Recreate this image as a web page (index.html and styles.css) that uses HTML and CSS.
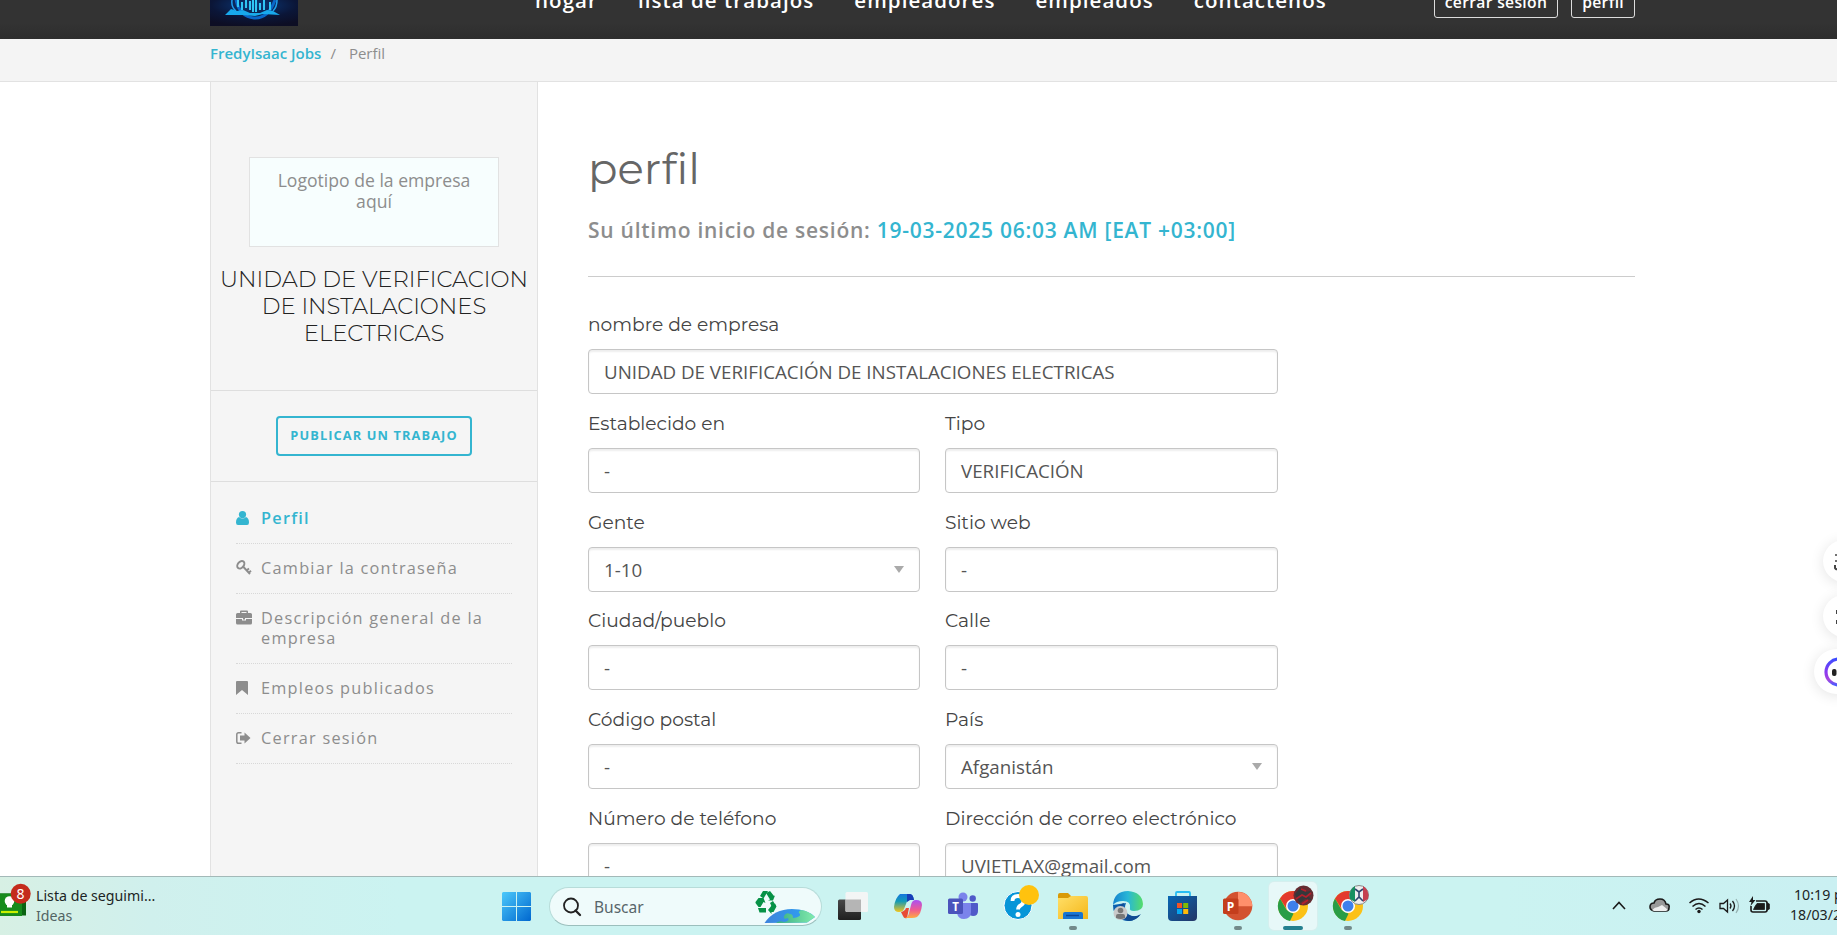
FILE: index.html
```html
<!DOCTYPE html>
<html lang="es">
<head>
<meta charset="utf-8">
<title>Perfil - FredyIsaac Jobs</title>
<link rel="stylesheet" href="styles.css">
</head>
<body>
<div class="screen">
<div class="page">
  <header class="topbar">
    <div class="container topbar-row">
      <svg class="brand" viewBox="0 0 88 26">
        <defs><radialGradient id="bg" cx=".5" cy=".2" r=".8"><stop offset="0" stop-color="#0b3a7c"/><stop offset=".6" stop-color="#0b1638"/><stop offset="1" stop-color="#0d0e24"/></radialGradient></defs>
        <rect width="88" height="26" fill="url(#bg)"/>
        <path d="M26 0Q30 17 44 18T65 0" fill="none" stroke="#0967c9" stroke-width="3"/>
        <path d="M22 0Q21 7 26 11M67 0Q67 7 63 11" fill="none" stroke="#1fa1f0" stroke-width="1.5"/>
        <path d="M28 0v7M32 2v8M36 0v8M40 1v9M43 0v12M46 0v12M50 3v7M54 0v10M60 2v8" stroke="#31c5f4" stroke-width="2"/>
        <path d="M15 15l6-6 6 2 6-1 7 3 10 0 7-3 6 1 7 4-17-1-8 2-12-1z" fill="#18a9ec"/>
      </svg>
      <nav class="nav"><a>hogar</a><a>lista de trabajos</a><a>empleadores</a><a>empleados</a><a>contáctenos</a></nav>
      <div class="account"><a>cerrar sesión</a><a>perfil</a></div>
    </div>
  </header>
  <div class="crumbs"><div class="container crumbs-row"><b>FredyIsaac Jobs</b><span>/</span><span class="here">Perfil</span></div></div>
  <div class="container body">
    <aside class="sidebar">
      <section class="company">
        <div class="logo-box">Logotipo de la empresa<br>aquí</div>
        <h2>UNIDAD DE VERIFICACION<br>DE INSTALACIONES<br>ELECTRICAS</h2>
      </section>
      <section class="post"><a class="post-btn">PUBLICAR UN TRABAJO</a></section>
      <ul class="menu">
        <li class="active"><svg viewBox="0 0 16 16"><circle cx="6.500" cy="4.600" r="3.600"/><path d="M3 7Q6.500 10 10 7Q13 8 13 12.500Q13 15 11 15H2Q0 15 0 12.500Q0 8 3 7Z"/></svg><span>Perfil</span></li>
        <li><svg viewBox="0 0 16 16"><ellipse cx="4.800" cy="4.800" rx="4.200" ry="3" transform="rotate(-50 4.800 4.800)" fill="none" stroke="#8d8d8d" stroke-width="2"/><path d="M7 6.500L14 14M10.500 10.500L13 8.500M12.800 12.700L15 10.800" fill="none" stroke="#8d8d8d" stroke-width="1.900"/></svg><span>Cambiar la contraseña</span></li>
        <li><svg viewBox="0 0 16 16"><path d="M4 3V1.500Q4 .5 5 .5H11Q12 .5 12 1.500V3H14.500Q16 3 16 4.500V8H0V4.500Q0 3 1.500 3ZM5.500 3H10.500V2H5.500ZM0 9H6V10.500H10V9H16V13Q16 14.500 14.500 14.500H1.500Q0 14.500 0 13ZM7 8H9V9.500H7Z" fill-rule="evenodd"/></svg><span>Descripción general de la<br>empresa</span></li>
        <li><svg viewBox="0 0 16 16"><path d="M0 2Q0 1 1 1H11Q12 1 12 2V15L6 10L0 15Z"/></svg><span>Empleos publicados</span></li>
        <li><svg viewBox="0 0 16 16"><path d="M5.500 2.700H2.500Q.8 2.700 .8 4.500V11.500Q.8 13.300 2.500 13.300H5.500" fill="none" stroke="#8d8d8d" stroke-width="1.500"/><path d="M4 5.500H8.500V2.500L14.500 8L8.500 13.500V10.500H4Z"/></svg><span>Cerrar sesión</span></li>
      </ul>
    </aside>
    <main class="main">
      <h1>perfil</h1>
      <p class="last">Su último inicio de sesión: <em>19-03-2025 06:03 AM [EAT +03:00]</em></p>
      <div class="form">
        <div class="field wide"><label>nombre de empresa</label><div class="input">UNIDAD DE VERIFICACIÓN DE INSTALACIONES ELECTRICAS</div></div>
        <div class="field"><label>Establecido en</label><div class="input">-</div></div>
        <div class="field"><label>Tipo</label><div class="input">VERIFICACIÓN</div></div>
        <div class="field"><label>Gente</label><div class="input">1-10<i class="caret"></i></div></div>
        <div class="field"><label>Sitio web</label><div class="input">-</div></div>
        <div class="field"><label>Ciudad/pueblo</label><div class="input">-</div></div>
        <div class="field"><label>Calle</label><div class="input">-</div></div>
        <div class="field"><label>Código postal</label><div class="input">-</div></div>
        <div class="field"><label>País</label><div class="input">Afganistán<i class="caret"></i></div></div>
        <div class="field"><label>Número de teléfono</label><div class="input">-</div></div>
        <div class="field"><label>Dirección de correo electrónico</label><div class="input">UVIETLAX@gmail.com</div></div>
      </div>
    </main>
  </div>
</div>
<div class="float f1"><svg viewBox="0 0 42 42"><path d="M12 15h18M12 21h18" stroke="#444" stroke-width="1.500"/><path d="M12 25v3q1 2 3 1v-4" fill="none" stroke="#444" stroke-width="2"/></svg></div>
<div class="float f2"><svg viewBox="0 0 42 42"><path d="M14 15v4M14 25v4" stroke="#444" stroke-width="2"/></svg></div>
<div class="float f3"><svg viewBox="0 0 45 45"><defs><linearGradient id="ring" x2="0" y2="1"><stop offset="0" stop-color="#3d4cff"/><stop offset=".5" stop-color="#8b39f0"/><stop offset=".8" stop-color="#a845dd"/><stop offset="1" stop-color="#4b5cff"/></linearGradient></defs><circle cx="25" cy="23" r="13" fill="#fff" stroke="url(#ring)" stroke-width="3.200"/><rect x="18" y="20" width="4.500" height="7" rx="2" fill="#222"/></svg></div>
<footer class="taskbar">
  <div class="widget">
    <svg viewBox="0 882 34 53"><path d="M0 893.500h22l4 1v21h-26z" fill="#0a6412"/><path d="M0 893.500h22v22.500h-22z" fill="#168b1c"/><path d="M1 912h17" stroke="#c8f000" stroke-width="2.200"/><circle cx="9.500" cy="901" r="4.800" fill="#fff"/><path d="M7 904h5v3.500h-5z" fill="#fff"/><circle cx="20.700" cy="893.800" r="10" fill="#c42b1c"/><text x="20.500" y="898.800" text-anchor="middle" font-size="14" fill="#fff" font-family="Noto Sans">8</text></svg>
    <div class="widget-text"><span>Lista de seguimi...</span><small>Ideas</small></div>
  </div>
  <svg class="start" viewBox="0 0 29 29"><defs><linearGradient id="win" x2="1" y2="1"><stop offset="0" stop-color="#4cc9fb"/><stop offset="1" stop-color="#0067cf"/></linearGradient></defs><path d="M1 0h13v14H0V1zM15 0h13l1 1v13H15zM0 15h14v14H1l-1-1zM15 15h14v13l-1 1H15z" fill="url(#win)"/></svg>
  <div class="search">
    <svg class="lens" viewBox="0 0 20 20"><circle cx="9" cy="8.500" r="7" fill="none" stroke="#222" stroke-width="1.800"/><path d="M13.500 13.500l4.500 4.500" stroke="#222" stroke-width="2.300" stroke-linecap="round"/></svg>
    <span>Buscar</span>
    <svg class="doodle" viewBox="754 890 64 34"><defs><linearGradient id="earth"><stop offset="0" stop-color="#3d83dc"/><stop offset="1" stop-color="#2ca5f5"/></linearGradient><linearGradient id="land"><stop offset="0" stop-color="#35ad83"/><stop offset="1" stop-color="#83ebad"/></linearGradient></defs><path d="M765.500 923Q775 909 793 909Q808 909 816 917L808 922.500Z" fill="url(#earth)"/><path d="M777 923q3-3 8-1q6-1 4-4q-5 2-4-2q2-4 6-2q3 0 3 4q8-1 7-4q-3-2 1-4q8 1 14 7l-8 5.500z" fill="url(#land)"/><g fill="#079247"><path d="M761 896l3-5h5l-4.500 7.500z"/><path d="M767 893l4-2 4 5 1-.5-2 5h-5l2-1z"/><path d="M756.500 902l3-4h5l2 5-2-1-3 5h-2l-3-4z"/><path d="M759 908h8v4.500h-6.500z"/><path d="M769 910l4-5v2.500l-1-2 4-2 1.500 3-3 5.500h-2v2z"/><path d="M774 901l3 5-4 1-2-4z"/></g></svg>
  </div>
  <div class="apps">
    <div class="app"><svg viewBox="829 882 48 48"><defs><linearGradient id="tv" x2="0" y2="1"><stop offset="0" stop-color="#484848"/><stop offset="1" stop-color="#202020"/></linearGradient></defs><rect x="838" y="899.500" width="23" height="20.500" rx="1.500" fill="url(#tv)"/><rect x="845.500" y="892" width="22.500" height="20" rx="1.500" fill="#f3f5f5"/><path d="M845.500 899.500H861V912H847q-1.500 0-1.500-1.500z" fill="#b5b5b5"/></svg></div>
    <div class="app"><svg viewBox="884 882 48 48"><defs><linearGradient id="cp1" x2="0" y2="1"><stop offset="0" stop-color="#1775de"/><stop offset=".4" stop-color="#119bb7"/><stop offset="1" stop-color="#f4c51b"/></linearGradient><linearGradient id="cp2" x2="0" y2="1"><stop offset="0" stop-color="#a951f4"/><stop offset=".55" stop-color="#f05b91"/><stop offset="1" stop-color="#ffac42"/></linearGradient></defs><path d="M900 894h10q3 0 4 6h-4q-3 0-4 4l-2 5q-1 3-5 3-5 0-5-5 1-9 6-13z" fill="url(#cp1)"/><path d="M907 894h3q3 0 4 6h-4l-3 2z" fill="#183db8"/><path d="M901 912q4-1 5-4l3 0-2 10q-3 1-4-2z" fill="#e84b35"/><path d="M916 900q6 0 6 5-1 9-5 12-2 1-5 1h-8q4 0 5-5l2-8q1-5 5-5z" fill="url(#cp2)"/></svg></div>
    <div class="app"><svg viewBox="939 882 48 48"><circle cx="963" cy="897" r="4.500" fill="#7b83eb"/><circle cx="972.700" cy="898.500" r="3.200" fill="#5059c9"/><path d="M970 903h7q1 0 1 1v7q0 5-5 5-3 0-4-2z" fill="#5059c9"/><path d="M957 903h14v9q0 7-7 7-6 0-7-6z" fill="#7b83eb"/><rect x="948" y="898.500" width="15" height="15.500" rx="1.500" fill="#4b53bc"/><text x="955.500" y="910.500" text-anchor="middle" font-family="Open Sans" font-weight="700" font-size="11.500" fill="#fff">T</text></svg></div>
    <div class="app"><svg viewBox="994 882 48 48"><circle cx="1018" cy="905.500" r="14" fill="#0795d8" stroke="#fff" stroke-width="1"/><path d="M1012.500 901q0-5 5.500-5t5.500 5q0 3-3 4.500-2.500 1.500-2.500 4" fill="none" stroke="#fff" stroke-width="3.800"/><circle cx="1018" cy="914.500" r="2.500" fill="#fff"/><circle cx="1029" cy="895" r="10" fill="#ffc20e"/></svg></div>
    <div class="app"><svg viewBox="1049 882 48 48"><defs><linearGradient id="fo" x2="1" y2="1"><stop offset="0" stop-color="#ffdf68"/><stop offset="1" stop-color="#f5b719"/></linearGradient></defs><path d="M1058 895q0-2 2-2h8l3 3v5h-13z" fill="#d99a08"/><path d="M1058 898h10l3-2h15q2 0 2 2v21h-30z" fill="url(#fo)"/><path d="M1063 919v-5q0-2 2-2h16q2 0 2 2v5z" fill="#1876d2"/><path d="M1066 915.500h13" stroke="#0a4795" stroke-width="1.500"/></svg><i class="dot"></i></div>
    <div class="app"><svg viewBox="1104 882 48 48"><defs><linearGradient id="ed"><stop offset="0" stop-color="#1683cf"/><stop offset=".5" stop-color="#29b7d6"/><stop offset="1" stop-color="#55dd69"/></linearGradient></defs><path d="M1113 905a15 15 0 0 0 27 10q-7 3-12-1t-2-11z" fill="#0c5fae"/><path d="M1113 905q1-14 15-14 14 1 15 13 0 7-9 7-5 0-4-3 1-7-7-7-7 0-10 4z" fill="url(#ed)"/><path d="M1124 903q-3 9 5 12 6 3 12-1-5 7-12 7-9-2-10-12 1-5 5-6z" fill="#104b92"/><circle cx="1120.500" cy="913" r="7" fill="#c9c9c9"/><circle cx="1120.500" cy="910.500" r="2.800" fill="#777"/><path d="M1116 918v-2q0-2 2-2h5q2 0 2 2v2q-4 2-9 0z" fill="#777"/></svg></div>
    <div class="app"><svg viewBox="1159 882 48 48"><defs><linearGradient id="st" x2="1" y2="1"><stop offset="0" stop-color="#0767b5"/><stop offset="1" stop-color="#243565"/></linearGradient></defs><path d="M1176 898v-5q0-1 1-1h12q1 0 1 1v5" fill="none" stroke="#28bdf2" stroke-width="1.800"/><path d="M1168 896h29v21q0 4-4 4h-21q-4 0-4-4z" fill="url(#st)"/><path d="M1177 903h5v5h-5z" fill="#f15325"/><path d="M1183.200 903h5v5h-5z" fill="#80bb03"/><path d="M1177 909h5v5h-5z" fill="#05a6f0"/><path d="M1183.200 909h5v5h-5z" fill="#ffba08"/></svg></div>
    <div class="app"><svg viewBox="1214 882 48 48"><circle cx="1238" cy="906" r="14.300" fill="#d35230"/><path d="M1238 892a14.300 14.300 0 0 1 14.300 14.300H1238z" fill="#ff8f6b"/><rect x="1223" y="898.500" width="15.500" height="15.500" rx="1.500" fill="#c43e1c"/><text x="1230.500" y="910.500" text-anchor="middle" font-family="Open Sans" font-weight="700" font-size="12" fill="#fff">P</text></svg><i class="dot"></i></div>
    <div class="app current"><svg viewBox="1269 882 48 48"><g id="chrome"><circle cx="1293" cy="906" r="15" fill="#fbc116"/><path d="M1280 898.500a15 15 0 0 1 26 0l-2 3h-11l-6 8z" fill="#e33b2e"/><path d="M1280 898.500l6.500 11.300 7 4-3.500 7.200a15 15 0 0 1-10-22.500z" fill="#299d46"/><circle cx="1293" cy="906" r="7" fill="#fff"/><circle cx="1293" cy="906" r="5.500" fill="#3e80ec"/></g><circle cx="1303.500" cy="895.500" r="10" fill="#652c31"/><path d="M1295 894l5-6 5 4 6-1-3 5 4 4-7-1-5 4-4-6z" fill="#35383b"/><path d="M1296 899l6-4 4 2 5-4M1301 889l5 2M1302 904l6-4" fill="none" stroke="#b31f2c" stroke-width="1.700"/></svg><i class="dot long"></i></div>
    <div class="app"><svg viewBox="1324 882 48 48"><use href="#chrome" x="55"/><circle cx="1359" cy="895" r="9.500" fill="#eee" stroke="#888"/><path d="M1355 886q-7 4-5 13l5 3z" fill="#169060"/><path d="M1363 886q7 4 5 13l-5 3z" fill="#c54050"/><path d="M1355 889l4 3 4-3M1355 901l4-4 4 4M1359 892v6" fill="none" stroke="#2e456e" stroke-width="1.600"/></svg><i class="dot"></i></div>
  </div>
  <svg class="tray" viewBox="1605 882 175 48" fill="none" stroke="#1a1a1a" stroke-width="1.600"><path d="M1614 909l6-6.500 6 6.500"/><path d="M1655 911q-4-1-4-4 0-4 4-4 1-4 6-4t6 5q4 0 3 4 0 3-3 3z" fill="#999"/><path d="M1653 910q3-3 6-3l4-2q4 3 6 5l-2 1h-12z" fill="#eee" stroke="none"/><path d="M1690.500 903q9-8 19 0M1693.500 906.500q6.500-6 13 0M1696.500 909.500q3.500-3 7 0" stroke-width="1.500"/><circle cx="1700" cy="911.500" r="1.700" fill="#1a1a1a" stroke="none"/><path d="M1721 903.500v5h3.500l4 3.500v-12l-4 3.500zM1731 903.500q2 2.500 0 5M1733.500 901q4 5 0 10" stroke-width="1.300"/><path d="M1737 899q5 7 0 14" stroke="#95b0b0" stroke-width="1.200"/><path d="M1757 901h9q2 0 2 2v7q0 2-2 2h-12q-2 0-2-2v-4"/><path d="M1758 903.500h7.500v6h-11l1.500-3z" fill="#1a1a1a" stroke-width=".8"/><path d="M1768.500 903.500l1.500 1v4l-1.500 1z" fill="#1a1a1a"/><path d="M1754 896l-4 6h2.500l-1 4 5-6h-2.500z" fill="#1a1a1a" stroke="none"/></svg>
  <div class="clock"><span>10:19 p. m.</span><span class="date">18/03/2025</span></div>
</footer>
</div>
</body>
</html>
```

FILE: styles.css
```css
* { box-sizing: border-box; }
body { margin: 0; overflow: hidden; font-family: "Open Sans", sans-serif; color: #8d8d8d; background: #fff; }
.screen { position: relative; width: 1837px; height: 935px; overflow: hidden; display: flex; flex-direction: column; }
.page { height: 876px; overflow: hidden; }
.container { width: 1425px; margin-left: 210px; }
.topbar { height: 39px; background: linear-gradient(#333 60%, #2d2d2d); overflow: hidden; }
.topbar-row { display: flex; height: 39px; align-items: flex-start; }
.brand { width: 88px; height: 26px; }
.nav { display: flex; gap: 40px; margin: -16px 0 0 237px; color: #fff; font-size: 20.500px; line-height: 32px; font-weight: 600; letter-spacing: 1.060px; white-space: nowrap; }
.account { display: flex; gap: 13px; margin: -22px 0 0 auto; color: #fff; font-size: 15.700px; font-weight: 600; line-height: 47px; white-space: nowrap; letter-spacing: .3px; }
.account a { height: 40px; border: 1px solid #ddd; border-radius: 3px; padding: 0 10px; }
.crumbs { height: 43px; background: #f4f4f4; border-bottom: 1px solid #e2e2e2; }
.crumbs-row { display: flex; font-size: 15px; line-height: 29px; }
.crumbs b { color: #34b5d0; font-weight: 600; margin-right: 9px; }
.here { margin-left: 13px; }
.body { display: flex; height: 794px; }
.sidebar { width: 328px; background: #f5f5f5; border: solid #e2e2e2; border-width: 0 1px; }
.company { height: 309px; padding-top: 75px; border-bottom: 1px solid #dedede; }
.logo-box { width: 250px; height: 90px; margin: 0 auto; padding-top: 12px; text-align: center; background: #f7fefe; border: 1px solid #e2e2e2; font-size: 17.600px; line-height: 21px; }
h2 { margin: 19px -10px 0; text-align: center; color: #222; font: 300 22.700px/27px Montserrat, Inter, sans-serif; white-space: nowrap; }
.post { height: 91px; padding-top: 25px; border-bottom: 1px solid #dedede; }
.post-btn { display: block; width: 196px; height: 40px; margin: 0 auto; border: 2px solid #34b5d0; border-radius: 4px; color: #34b5d0; font-size: 12.800px; font-weight: 700; line-height: 34px; letter-spacing: 1.100px; text-align: center; white-space: nowrap; }
.menu { list-style: none; margin: 12px 25px 0; padding: 0; font-size: 16.300px; line-height: 20px; letter-spacing: 1.250px; }
.menu li { display: flex; gap: 9px; padding: 14px 0 15.100px; border-bottom: 1px dotted #d8d8d8; white-space: nowrap; }
.menu li.active { color: #34b5d0; font-weight: 600; }
.menu svg { width: 16px; height: 16px; margin-top: 2px; fill: currentColor; overflow: visible; }
.main { width: 1047px; margin-left: 50px; }
h1 { margin: 59px 0 0; color: #666; font: 400 43.500px/56px Montserrat, Inter, sans-serif; }
.last { margin: 20px 0 0; height: 60px; border-bottom: 1px solid #ccc; font-size: 21px; line-height: 27px; font-weight: 600; letter-spacing: .74px; white-space: nowrap; }
.last em { color: #34b5d0; font-style: normal; }
.form { width: 690px; display: grid; grid-template-columns: 332px 333px; column-gap: 25px; row-gap: 16.800px; margin-top: 35px; }
.wide { grid-column: span 2; }
.field label { display: block; height: 37px; color: #444; font: 400 18.660px/26px Montserrat, Inter, sans-serif; white-space: nowrap; }
.input { display: flex; align-items: center; justify-content: space-between; height: 45px; padding: 0 15px; border: 1px solid #c6c6c6; border-radius: 4px; box-shadow: inset 0 2px 2px #eee; color: #555; font-size: 18.760px; }
.caret { width: 0; height: 0; border: 5px solid transparent; border-top: 7px solid #aaa; border-bottom: 0; }
.float { position: absolute; background: #fff; border-radius: 50%; box-shadow: 0 2px 14px #0000001c; }
.f1 { left: 1823px; top: 540px; width: 42px; height: 42px; }
.f2 { left: 1823px; top: 595px; width: 42px; height: 42px; }
.f3 { left: 1814px; top: 649px; width: 45px; height: 45px; }
.taskbar { height: 59px; border-top: 1px solid #a3b9b8; background: linear-gradient(90deg, #d7f0e4 0, #d0f0ed 150px, #cbf3f1 400px, #cbf3f1 1500px, #caf0f2); display: flex; color: #1c2424; font-family: "Noto Sans", sans-serif; }
.taskbar > * { flex-shrink: 0; }
.widget { width: 501.500px; display: flex; padding-top: 5px; }
.widget svg { width: 34px; height: 53px; }
.widget-text { display: flex; flex-direction: column; margin: 4px 0 0 2px; font-size: 14.200px; line-height: 20px; }
.widget-text small { font-size: 14.200px; color: #526464; }
.start { width: 29px; height: 29px; margin-top: 15px; }
.search { width: 273px; height: 39px; margin: 10px 3.500px 0 18.500px; padding-left: 12px; border: 1px solid #b7dcd9; border-bottom-color: #9bbfbd; border-radius: 20px; background: #effbfb; display: flex; align-items: center; font-size: 15.500px; color: #58656a; }
.lens { width: 20px; height: 20px; margin-right: 12px; }
.doodle { width: 64px; height: 34px; margin-left: auto; margin-right: 4px; }
.apps { display: flex; width: 550px; }
.app { width: 55px; display: flex; flex-direction: column; align-items: center; padding-top: 5px; }
.app svg { width: 48px; height: 48px; }
.current svg { background: #e7f8f8; border-radius: 5px; box-shadow: 0 0 0 1px #d5efee; }
.dot { width: 8px; height: 4px; margin-top: -4px; border-radius: 2px; background: #728a8a; }
.long { width: 20px; background: #24808f; }
.tray { width: 175px; height: 48px; margin: 5px 0 0 228.500px; }
.clock { display: flex; flex-direction: column; margin: 8px 0 0 15px; font-size: 14.200px; line-height: 20px; white-space: nowrap; }
.date { margin-left: -4px; }
```
